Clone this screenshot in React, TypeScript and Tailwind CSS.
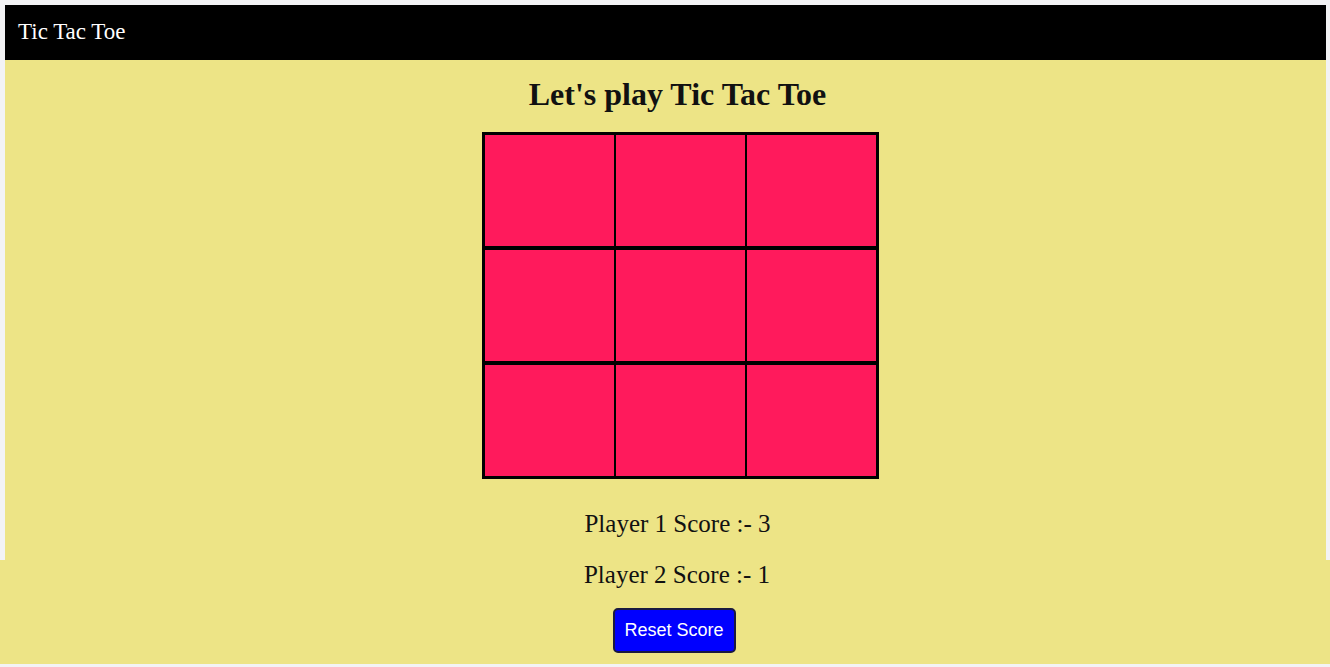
const cells = Array.from({ length: 9 }, (_, i) => i);

export default function App() {
  return (
    <div className="min-h-screen bg-[#f3f3f5] font-['Liberation_Serif',serif]">
      <div className="pt-[5px] pl-[5px] pr-[4px]">
        <nav className="h-[55px] bg-black flex items-center px-[13px]">
          <span className="text-white text-[23px]">Tic Tac Toe</span>
        </nav>
        <main className="bg-[#ede486] h-[500px] pl-[24px] flex flex-col items-center">
          <h1 className="mt-[16px] text-[32px] font-bold leading-[37px] text-[#111]">
            Let's play Tic Tac Toe
          </h1>
          <div className="mt-[19px] ml-[6px] bg-black p-[3px] grid grid-cols-3 gap-x-[2px] gap-y-[4px]">
            {cells.map((c) => (
              <div key={c} className="w-[129px] h-[111px] bg-[#ff1a5c]" />
            ))}
          </div>
          <p className="mt-[30px] text-[25px] leading-[30px] text-[#111]">Player 1 Score :- 3</p>
        </main>
      </div>
      <section className="bg-[#ede486] h-[104px] pl-[24px] flex flex-col items-center">
        <p className="text-[25px] leading-[30px] text-[#111]">Player 2 Score :- 1</p>
        <button className="mt-[18px] mr-[6px] w-[123px] h-[45px] bg-[#0000ff] border-2 border-[#1a1a40] rounded-[5px] text-white text-[18px] font-['Liberation_Sans',Arial,sans-serif]">
          Reset Score
        </button>
      </section>
    </div>
  );
}
